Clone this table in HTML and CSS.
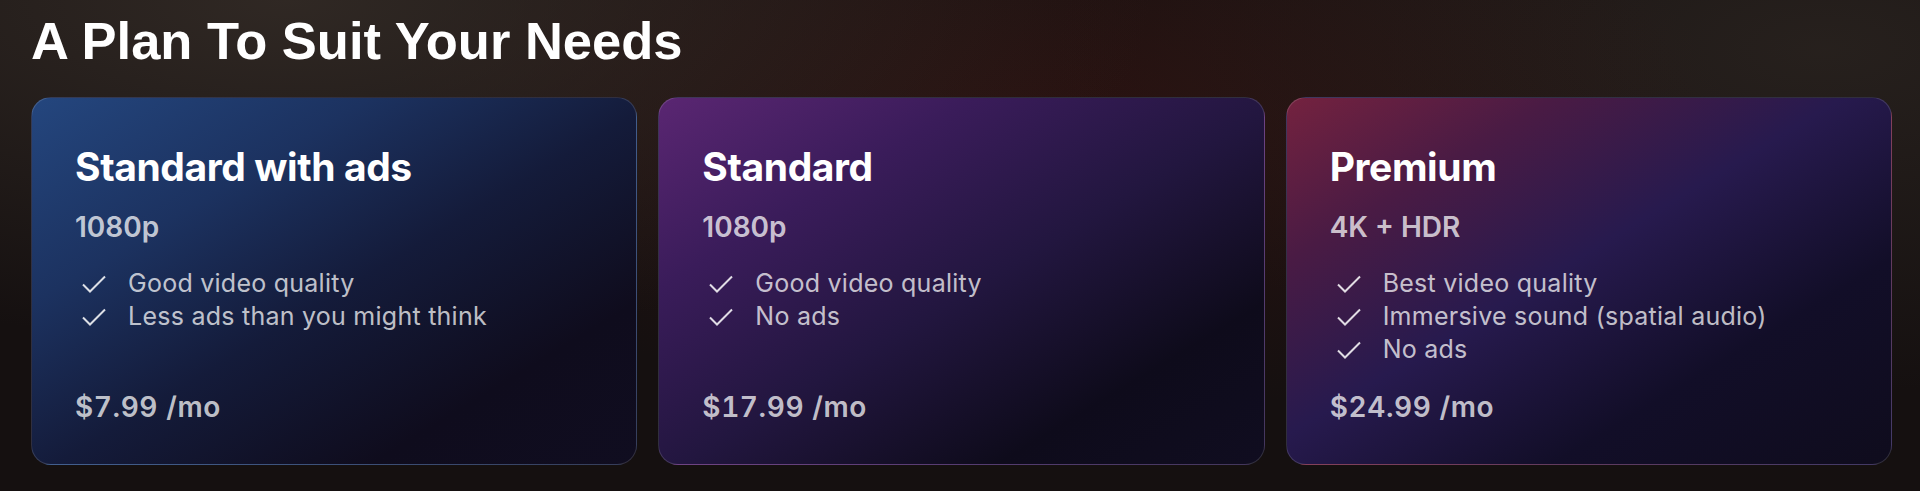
FILE: index.html
```html
<!DOCTYPE html>
<html lang="en">
<head>
    <meta charset="UTF-8">
    <meta name="viewport" content="width=device-width, initial-scale=1.0">
    <title>Plans</title>
    <link rel="stylesheet" href="styles.css">
</head>
<body>
<section class="plans">
    <h1>A Plan To Suit Your Needs</h1>
    <div class="plan-grid">
        <div class="plan-card plan-ads">
            <h2>Standard with ads</h2>
            <p class="resolution">1080p</p>
            <ul class="features">
                <li><svg class="check" viewBox="0 0 24 18"><path d="M1 9.5 L8 16.5 L23 1.5"/></svg>Good video quality</li>
                <li><svg class="check" viewBox="0 0 24 18"><path d="M1 9.5 L8 16.5 L23 1.5"/></svg>Less ads than you might think</li>
            </ul>
            <p class="price">$7.99 /mo</p>
        </div>

        <div class="plan-card plan-standard">
            <h2>Standard</h2>
            <p class="resolution">1080p</p>
            <ul class="features">
                <li><svg class="check" viewBox="0 0 24 18"><path d="M1 9.5 L8 16.5 L23 1.5"/></svg>Good video quality</li>
                <li><svg class="check" viewBox="0 0 24 18"><path d="M1 9.5 L8 16.5 L23 1.5"/></svg>No ads</li>
            </ul>
            <p class="price">$17.99 /mo</p>
        </div>

        <div class="plan-card plan-premium">
            <h2>Premium</h2>
            <p class="resolution">4K + HDR</p>
            <ul class="features">
                <li><svg class="check" viewBox="0 0 24 18"><path d="M1 9.5 L8 16.5 L23 1.5"/></svg>Best video quality</li>
                <li><svg class="check" viewBox="0 0 24 18"><path d="M1 9.5 L8 16.5 L23 1.5"/></svg>Immersive sound (spatial audio)</li>
                <li><svg class="check" viewBox="0 0 24 18"><path d="M1 9.5 L8 16.5 L23 1.5"/></svg>No ads</li>
            </ul>
            <p class="price">$24.99 /mo</p>
        </div>
    </div>
</section>
</body>
</html>
```

FILE: styles.css
```css
html, body {
    height: 100%;
}
body {
    margin: 0;
    font-family: Inter, "Noto Sans", sans-serif;
    background-color: #151010;
    background-image:
        radial-gradient(ellipse 45% 70% at 15% 0%, rgba(70, 60, 52, 0.55), rgba(70, 60, 52, 0) 100%),
        radial-gradient(ellipse 35% 60% at 55% 25%, rgba(80, 22, 18, 0.35), rgba(80, 22, 18, 0) 100%),
        radial-gradient(ellipse 40% 70% at 95% 10%, rgba(60, 52, 45, 0.45), rgba(60, 52, 45, 0) 100%);
    overflow: hidden;
}
.plans {
    padding: 11px 28px 0 31px;
}
h1 {
    margin: 0 0 26px;
    font-family: "Liberation Sans", Arial, sans-serif;
    font-weight: 700;
    font-size: 52.5px;
    line-height: 60px;
    color: #fff;
}
.plan-grid {
    display: grid;
    grid-template-columns: repeat(3, 1fr);
    gap: 21px;
}
.plan-card {
    display: flex;
    flex-direction: column;
    padding: 45px 40px 40px 43px;
    border: 1px solid rgba(255, 255, 255, 0.14);
    border-radius: 20px;
    color: rgba(255, 255, 255, 0.74);
}
.plan-ads {
    background: linear-gradient(to bottom right, #24467e 0%, #1c3260 28%, #141b3a 52%, #0f0c1d 78%, #100d20 100%);
}
.plan-standard {
    background: linear-gradient(to bottom right, #5a2672 0%, #3a1c5a 26%, #22163f 52%, #0e0b1b 78%, #100d20 100%);
}
.plan-premium {
    background: linear-gradient(to bottom right, #74223f 0%, #4a1b44 22%, #271a4e 46%, #120e28 72%, #0f0c1d 100%);
}
.plan-card h2 {
    margin: 0 0 19px;
    font-size: 39px;
    line-height: 48px;
    font-weight: 700;
    letter-spacing: -0.4px;
    color: #fff;
}
.resolution {
    margin: 0 0 23px;
    font-size: 28px;
    line-height: 34px;
    font-weight: 600;
}
.features {
    margin: 0 0 24px;
    padding: 0 0 0 7px;
    list-style: none;
}
.features li {
    display: flex;
    align-items: center;
    gap: 22px;
    font-size: 25px;
    line-height: 33px;
    font-weight: 400;
    letter-spacing: 0.25px;
}
.check {
    width: 24px;
    height: 18px;
    flex: none;
    fill: none;
    stroke: rgba(255, 255, 255, 0.85);
    stroke-width: 2;
}
.price {
    margin: auto 0 0;
    font-size: 28px;
    line-height: 34px;
    font-weight: 600;
    letter-spacing: 0.6px;
    font-variant-numeric: tabular-nums;
}
```
